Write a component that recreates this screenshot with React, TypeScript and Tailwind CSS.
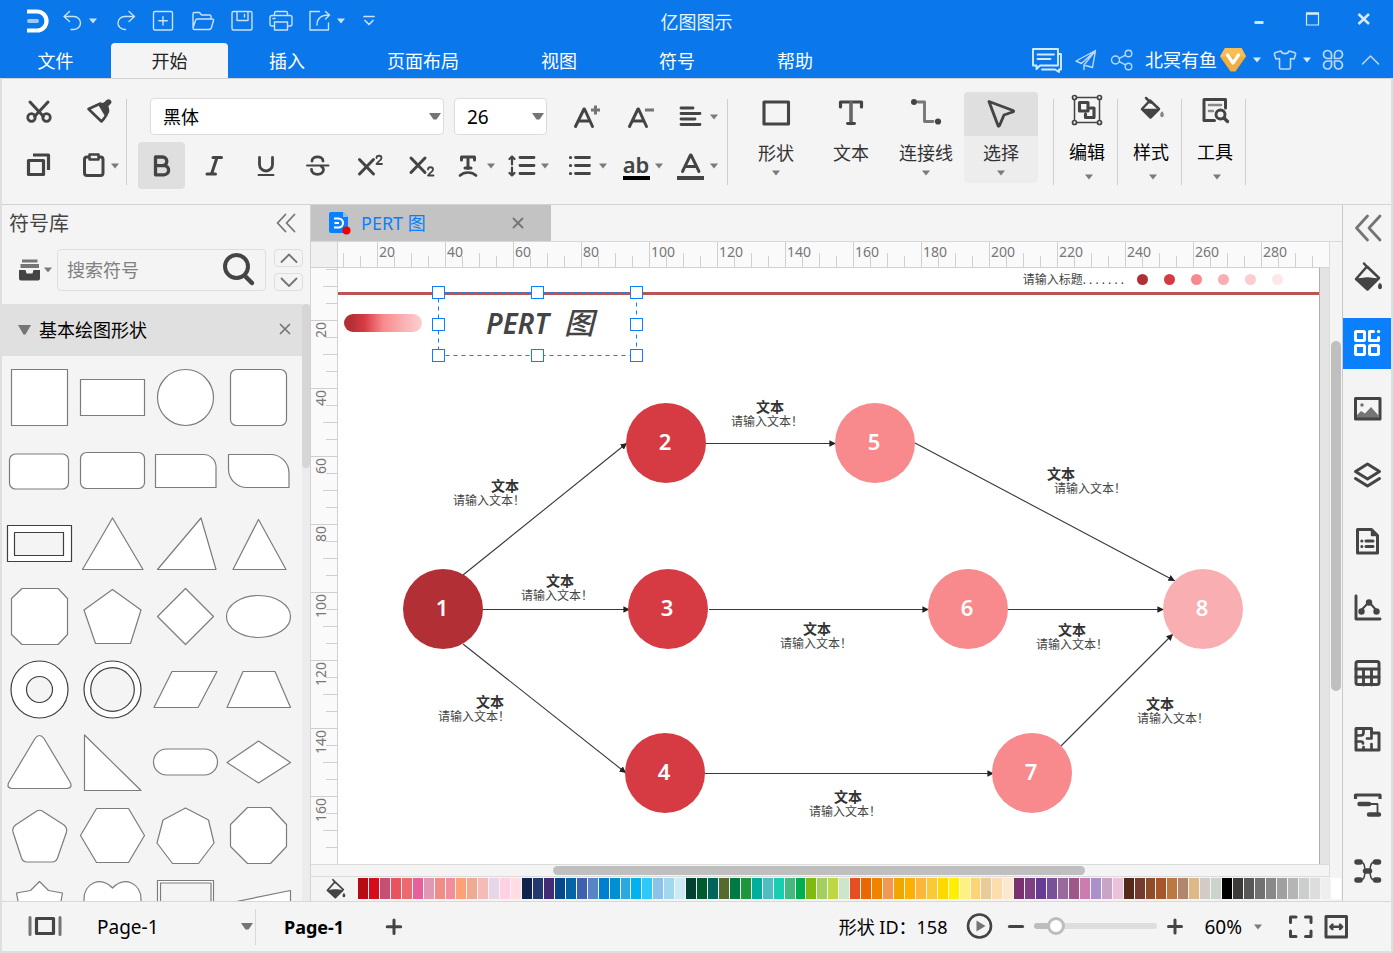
import React from "react";

type Kids = { children?: React.ReactNode };

function Glyph({ w, h, className = "", children }: Kids & { w: number; h: number; className?: string }) {
  return (
    <svg
      width={w}
      height={h}
      viewBox={`0 0 ${w} ${h}`}
      fill="none"
      stroke="currentColor"
      strokeWidth={1.4}
      strokeLinecap="round"
      strokeLinejoin="round"
      aria-hidden="true"
      className={`shrink-0 ${className}`}
    >
      {children}
    </svg>
  );
}

function Btn({ label, className = "", children }: Kids & { label: string; className?: string }) {
  return (
    <button type="button" aria-label={label} className={`flex shrink-0 items-center justify-center ${className}`}>
      {children}
    </button>
  );
}

function Caret({ className = "" }: { className?: string }) {
  return (
    <svg width={10} height={8} viewBox="0 0 10 8" aria-hidden="true" className={`shrink-0 ${className}`}>
      <path d="M1 1.5h8L5 6.5z" fill="currentColor" />
    </svg>
  );
}

function BigCaret({ className = "" }: { className?: string }) {
  return (
    <svg width={12} height={8} viewBox="0 0 12 8" aria-hidden="true" className={`shrink-0 text-[#757575] ${className}`}>
      <path d="M0 0h12L7.5 6.5h-3z" fill="currentColor" />
    </svg>
  );
}

/* ---------- title bar ---------- */

function TitleBar() {
  return (
    <div className="grid h-[43px] grid-cols-[1fr_auto_1fr] items-center">
      <div className="flex items-center pb-[2px] pl-[26px] text-[#c9e1fb]">
        <svg width={24} height={26} viewBox="0 0 24 26" aria-hidden="true" className="shrink-0">
          <path d="M1 3.500h10a9.500 9.500 0 0 1 0 19H1" fill="none" stroke="#fff" strokeWidth="4.200" />
          <path d="M3 13h8" stroke="#9cc9f7" strokeWidth="4" strokeLinecap="round" />
        </svg>
        <Btn label="撤销" className="ml-[10px]">
          <Glyph w={24} h={24}>
            <path d="M9.500 2.500L4 7.500l5.500 5M4 7.500h10a6.500 6.500 0 0 1 0 13h-3" />
          </Glyph>
        </Btn>
        <Btn label="撤销选项" className="ml-1"><Caret /></Btn>
        <Btn label="恢复" className="ml-4">
          <Glyph w={24} h={24}>
            <path d="M15 2.500l5.500 5-5.500 5M20.500 7.500h-10a6.500 6.500 0 0 0 0 13h1" />
          </Glyph>
        </Btn>
        <Btn label="新建" className="ml-[13px]">
          <Glyph w={24} h={24}>
            <rect x="2.500" y="2.500" width="19" height="18.500" rx="1.500" />
            <path d="M12 7.500v8.500M7.800 11.800h8.500" />
          </Glyph>
        </Btn>
        <Btn label="打开" className="ml-4">
          <Glyph w={24} h={24}>
            <path d="M2 19V5q0-1.500 1.500-1.500h5l2 2.500h8q1.500 0 1.500 1.500V10M2 19l2.500-7.500Q5 10 6.500 10H21q2 0 1.500 1.500l-2 7q-.5 2-2.500 2H3.500Q2 20.500 2 19" />
          </Glyph>
        </Btn>
        <Btn label="保存" className="ml-[15px]">
          <Glyph w={24} h={24}>
            <rect x="2" y="2.500" width="20" height="18.500" rx="1.500" />
            <path d="M7 3v8.500h11V3M14.500 5.500v2.500" />
          </Glyph>
        </Btn>
        <Btn label="打印" className="ml-[15px]">
          <Glyph w={24} h={24}>
            <path d="M5.500 6V4q0-1.500 1.500-1.500h10q1.500 0 1.500 1.500v2M5.500 17H3q-2 0-2-2V8.500q0-2 2-2h18q2 0 2 2V15q0 2-2 2h-2.500M5.500 13h13v8h-13zM4 9.500h2" />
          </Glyph>
        </Btn>
        <Btn label="导出" className="ml-[15px]">
          <Glyph w={24} h={24}>
            <path d="M11.500 2.500H2v18.500h18.500v-7M9 16c0-6 3.500-10 12-10M17.500 2.500l4 3.500-4 4" />
          </Glyph>
        </Btn>
        <Btn label="导出选项" className="ml-1"><Caret /></Btn>
        <Btn label="更多" className="ml-[11px]">
          <Glyph w={24} h={24}>
            <path d="M7 7.500h10M8 11.500l4 4 4-4" strokeWidth="1.700" />
          </Glyph>
        </Btn>
      </div>
      <h1 className="text-[18px] leading-6 text-[#e8f3ff]">亿图图示</h1>
      <div className="flex items-center justify-end gap-[24px] pr-[17px] pb-[6px] text-[#d7eafd]">
        <Btn label="最小化">
          <Glyph w={24} h={24}><path d="M7.500 15.500h9" strokeWidth="2.800" strokeLinecap="butt" /></Glyph>
        </Btn>
        <Btn label="最大化" className="ml-[5px]">
          <Glyph w={24} h={24}>
            <path d="M6.500 6.500h12v11.500h-12z" strokeWidth="1.200" strokeLinejoin="miter" />
            <path d="M6 6.500h13" strokeWidth="2.600" strokeLinecap="butt" />
          </Glyph>
        </Btn>
        <Btn label="关闭" className="ml-1">
          <Glyph w={24} h={24}><path d="M6.500 7l10.500 10M17 7L6.500 17" strokeWidth="2.500" strokeLinecap="butt" /></Glyph>
        </Btn>
      </div>
    </div>
  );
}

const menus = ["插入", "页面布局", "视图", "符号", "帮助"];

function MenuBar() {
  return (
    <div className="flex h-[35px] items-stretch text-white">
      <nav className="flex text-[18px] leading-6">
        <button type="button" className="w-[111px]">文件</button>
        <button type="button" className="w-[117px] rounded-t-sm bg-[#f4f4f4] text-[#222]">开始</button>
        {menus.map((m) => (
          <button key={m} type="button" className="px-[41px]">{m}</button>
        ))}
      </nav>
      <div className="ml-auto flex items-center pr-[11px] pb-[2px] text-[#b9d9fa]">
        <Btn label="消息">
          <Glyph w={32} h={28} className="text-[#d7eafd]">
            <path d="M2 3h25v16.500H9L5.500 23v-3.500H2z" strokeWidth="1.900" />
            <path d="M6.500 8.500h16.500M6.500 13h13" strokeWidth="1.900" />
            <path d="M27.500 8h2.500v15.500h-2V26l-4-2.500H11" strokeWidth="1.900" />
          </Glyph>
        </Btn>
        <Btn label="发送" className="ml-[11px]">
          <Glyph w={24} h={24}>
            <path d="M21.500 2.500L2 13l5.500 2.500zM21.500 2.500L10 17l8.500 2.500zM10 17v4.500" />
          </Glyph>
        </Btn>
        <Btn label="分享" className="ml-3">
          <Glyph w={24} h={24}>
            <circle cx="5.500" cy="12" r="4" />
            <circle cx="18.500" cy="5.500" r="3.300" />
            <circle cx="18.500" cy="18.500" r="3.300" />
            <path d="M9.200 10.300l6.300-3.200M9.200 13.700l6.300 3.200" />
          </Glyph>
        </Btn>
        <span className="ml-[11px] text-[18px] leading-6 text-white">北冥有鱼</span>
        <svg width={28} height={26} viewBox="0 0 28 26" aria-hidden="true" className="ml-[2px]">
          <path d="M6 1h16.500l4.500 8.500L16.500 24.500h-5L1 9.500z" fill="#f2ae3e" />
          <path d="M6 1h16.500l4.500 8.500H1z" fill="#f7bd57" />
          <path d="M8.500 8l5.500 8 5.500-8" fill="none" stroke="#fff" strokeWidth="3.200" strokeLinecap="round" strokeLinejoin="round" />
        </svg>
        <Btn label="会员选项" className="ml-[5px] text-[#d7eafd]"><Caret /></Btn>
        <Btn label="皮肤" className="ml-[11px]">
          <Glyph w={24} h={24}>
            <path d="M8 3c1 3.500 7 3.500 8 0l5.500 1.500q1.500.8 1 2.200L21 11l-3.500-.5v9q0 1.500-1.500 1.500H8q-1.500 0-1.500-1.500v-9L3 11 1.500 6.700q-.5-1.400 1-2.200z" strokeWidth="1.600" />
          </Glyph>
        </Btn>
        <Btn label="皮肤选项" className="ml-[5px] text-[#d7eafd]"><Caret /></Btn>
        <Btn label="应用" className="ml-[9px]">
          <Glyph w={24} h={24}>
            <path d="M10.500 10.500H6.700a4 4 0 1 1 3.800-3.800zM13.500 10.500h3.800a4 4 0 1 0-3.800-3.800zM10.500 13h-3.800a4 4 0 1 0 3.800 3.800zM13.500 13h3.800a4 4 0 1 1-3.800 3.800z" strokeWidth="1.700" />
          </Glyph>
        </Btn>
        <Btn label="折叠功能区" className="ml-[13px]">
          <Glyph w={24} h={24}><path d="M4.500 16l8-8 8 8" strokeWidth="1.600" /></Glyph>
        </Btn>
      </div>
    </div>
  );
}

/* ---------- ribbon ---------- */

function Divider() {
  return <div className="mt-[20px] h-[86px] w-px shrink-0 bg-[#cfcfcf]" />;
}

function Drop({ label, className = "", children }: Kids & { label: string; className?: string }) {
  return (
    <Btn label={label} className={`h-[47px] gap-1 ${className}`}>
      {children}
      <Caret className="text-[#7a7a7a]" />
    </Btn>
  );
}

function LetterA({ sign }: { sign?: "+" | "-" }) {
  return (
    <Glyph w={28} h={28}>
      <path d="M3.500 23.500L12 6h.5L20.500 23.500M7 18h10.500" strokeWidth="3" />
      {sign && <path d="M19 7h9" strokeWidth="3" strokeLinecap="butt" className="text-[#757575]" />}
      {sign === "+" && <path d="M23.500 2.500v9" strokeWidth="3" strokeLinecap="butt" className="text-[#757575]" />}
    </Glyph>
  );
}

function ToolButton({ text, caret = true, active = false, children }: Kids & { text: string; caret?: boolean; active?: boolean }) {
  return (
    <button
      type="button"
      className={`flex h-[91px] w-[74px] shrink-0 flex-col items-center rounded-sm text-[#333] ${active ? "bg-[#ededed]" : ""}`}
    >
      <span className={`flex h-[44px] w-full items-center justify-center rounded-t-sm pb-[2px] text-[#444] ${active ? "bg-[#dfdfdf]" : ""}`}>
        {children}
      </span>
      <span className="mt-[5px] text-[18px] leading-6">{text}</span>
      {caret && <Caret className="mt-[4px] text-[#7a7a7a]" />}
    </button>
  );
}

function MenuTool({ text, children }: Kids & { text: string }) {
  return (
    <button type="button" className="flex w-[63px] shrink-0 flex-col items-center pt-[15px] pl-[3px] text-black">
      <span className="flex h-[32px] items-center text-[#444]">{children}</span>
      <span className="mt-[14px] text-[18px] leading-6">{text}</span>
      <Caret className="mt-[9px] ml-1 text-[#7a7a7a]" />
    </button>
  );
}

function Ribbon() {
  return (
    <div className="flex h-[127px] items-start overflow-hidden border-t border-b border-[#d2d2d2] bg-[#f4f4f4] text-[#444]">
      <div className="grid w-[124px] shrink-0 grid-cols-[74px_50px] grid-rows-[54px_54px] items-center pt-[6px]">
        <Btn label="剪切">
          <Glyph w={28} h={28}>
            <path d="M5 4l13.500 14.500M23 4L9.500 18.500" strokeWidth="3" />
            <circle cx="6.500" cy="19.500" r="3.800" strokeWidth="2.700" />
            <circle cx="21.500" cy="19.500" r="3.800" strokeWidth="2.700" />
          </Glyph>
        </Btn>
        <Btn label="格式刷" className="pr-1">
          <Glyph w={28} h={28}>
            <path d="M15.500 5.500L3.500 11l13 12.500c3-3 5-5.500 6-9.500z" strokeWidth="2.600" />
            <path d="M13.500 6c3-.5 5 0 6.500-1.500L22 2.500c2.500-1.500 5 1 3 3L23 7.500c-1 1.500 1.500 3.500.5 6.500l-3.500 3z" fill="currentColor" />
          </Glyph>
        </Btn>
        <Btn label="复制">
          <Glyph w={28} h={28}>
            <path d="M3.500 8.500h15v14h-15z" strokeWidth="3.200" />
            <path d="M8 3h15.500v15" strokeWidth="3.200" strokeLinecap="butt" />
          </Glyph>
        </Btn>
        <Btn label="粘贴" className="gap-[3px] pr-[3px]">
          <Glyph w={28} h={28}>
            <rect x="5.500" y="5" width="18.500" height="18.500" rx="2.500" strokeWidth="3" />
            <rect x="10.500" y="2.500" width="9" height="5" fill="#f4f4f4" strokeWidth="2.500" />
          </Glyph>
          <Caret className="text-[#7a7a7a]" />
        </Btn>
      </div>
      <Divider />
      <div className="flex shrink-0 flex-col">
        <div className="flex items-center pt-[19px] pl-[23px]">
          <div className="relative">
            <select aria-label="字体" className="block h-[37px] w-[294px] appearance-none rounded-sm border border-[#dcdcdc] bg-white pt-[2px] pl-3 text-[18px] text-black">
              <option>黑体</option>
            </select>
            <BigCaret className="pointer-events-none absolute top-[15px] right-[3px]" />
          </div>
          <div className="relative ml-[10px]">
            <select aria-label="字号" className="block h-[37px] w-[93px] appearance-none rounded-sm border border-[#dcdcdc] bg-white pt-[2px] pl-3 text-[19px] text-black">
              <option>26</option>
            </select>
            <BigCaret className="pointer-events-none absolute top-[15px] right-[3px]" />
          </div>
          <Btn label="增大字号" className="ml-[25px]"><LetterA sign="+" /></Btn>
          <Btn label="减小字号" className="ml-[26px]"><LetterA sign="-" /></Btn>
          <Btn label="对齐" className="ml-[23px] gap-1">
            <Glyph w={28} h={28}>
              <path d="M4 5h12M4 10.500h19M4 16h14M4 21.500h19" strokeWidth="2.800" />
            </Glyph>
            <Caret className="text-[#7a7a7a]" />
          </Btn>
        </div>
        <div className="flex items-center pt-[7px] pl-[11px]">
          <Btn label="加粗" className="h-[47px] w-[47px] rounded-sm bg-[#dfdfdf]">
            <Glyph w={28} h={28}>
              <path d="M7.500 5h7a4.300 4.300 0 0 1 0 8.600H7.500zM7.500 13.600h8.500a4.600 4.600 0 0 1 0 9.200H7.500z" strokeWidth="3.300" />
            </Glyph>
          </Btn>
          <Btn label="斜体" className="ml-[5px] h-[47px] w-[47px]">
            <Glyph w={28} h={28}><path d="M13 5.500h8.500M7 22h8.500M17 5.500l-5.500 16.500" strokeWidth="3" /></Glyph>
          </Btn>
          <Btn label="下划线" className="ml-[5px] h-[47px] w-[47px]">
            <Glyph w={28} h={28}>
              <path d="M7.500 5.500v7a6.500 6.500 0 0 0 13 0v-7" strokeWidth="2.800" />
              <path d="M6.500 23h15" strokeWidth="1.900" />
            </Glyph>
          </Btn>
          <Btn label="删除线" className="ml-[5px] h-[47px] w-[47px]">
            <Glyph w={28} h={28}>
              <path d="M19 9C19 3.500 8 3.500 8 9M7.500 17.500c0 6.500 12 6.500 12 0 0-1-.5-2-2-3" strokeWidth="2.800" />
              <path d="M3 13.500h21.500" strokeWidth="1.900" />
            </Glyph>
          </Btn>
          <Btn label="上标" className="ml-[5px] h-[47px] w-[47px]">
            <Glyph w={28} h={28}>
              <path d="M3.500 7.500l14 14.500M17.500 7.500l-14 14.500" strokeWidth="3" />
              <path d="M20.500 6c0-3 5-3 5 0 0 2-3 3-5 6h5.500" strokeWidth="1.800" />
            </Glyph>
          </Btn>
          <Btn label="下标" className="ml-[5px] h-[47px] w-[47px]">
            <Glyph w={28} h={28}>
              <path d="M3 6l14 14.500M17 6l-14 14.500" strokeWidth="3" />
              <path d="M20 17.500c0-3 5-3 5 0 0 2-3 3-5 6h5.500" strokeWidth="1.800" />
            </Glyph>
          </Btn>
          <Drop label="文字方向" className="ml-[9px]">
            <Glyph w={28} h={28}>
              <path d="M7.500 8V5h13v3M14 5.500v11M11 16h6" strokeWidth="3" />
              <path d="M6 23.500c4-4 12-4 16 0" strokeWidth="2.600" />
            </Glyph>
          </Drop>
          <Drop label="行距" className="ml-[12px]">
            <Glyph w={28} h={28}>
              <path d="M12 5.500h14M12 13.500h14M12 21.500h14" strokeWidth="2.900" />
              <path d="M4 4.500v8M1.500 7L4 4.500 6.500 7M4 15.500v8M1.500 21L4 23.500 6.500 21" strokeWidth="2.200" />
            </Glyph>
          </Drop>
          <Drop label="列表" className="ml-[16px]">
            <Glyph w={28} h={28}>
              <path d="M9.500 5.500h14M9.500 13.500h14M9.500 21.500h14" strokeWidth="2.800" />
              <path d="M4.500 5.500h.1M4.500 13.500h.1M4.500 21.500h.1" strokeWidth="3.200" />
            </Glyph>
          </Drop>
          <Drop label="突出显示" className="ml-[14px]">
            <span className="flex w-[28px] flex-col items-center">
              <span className="text-[22px] leading-[24px] font-semibold">ab</span>
              <span className="h-1 w-[27px] bg-black" />
            </span>
          </Drop>
          <Drop label="字体颜色" className="ml-[13px]">
            <Glyph w={28} h={28}>
              <path d="M5.500 19.500L13.500 3h.5L22 19.500M8.500 14.500h10.500" strokeWidth="2.900" />
              <path d="M0 26h27" strokeWidth="4" strokeLinecap="butt" />
            </Glyph>
          </Drop>
        </div>
      </div>
      <div className="ml-2 flex"><Divider /></div>
      <div className="ml-[11px] flex shrink-0 gap-px pt-[13px]">
        <ToolButton text="形状">
          <Glyph w={32} h={32}><path d="M4 5h24.500v22H4z" strokeWidth="3.100" /></Glyph>
        </ToolButton>
        <ToolButton text="文本" caret={false}>
          <Glyph w={32} h={32}>
            <path d="M5.500 10V5h21v5" strokeWidth="3.200" />
            <path d="M16 5.500v21" strokeWidth="3.600" className="text-[#666]" />
            <path d="M12.500 26.500h7" strokeWidth="2.900" />
          </Glyph>
        </ToolButton>
        <ToolButton text="连接线">
          <Glyph w={32} h={32}>
            <path d="M8 5h6.500v19.500H23" strokeWidth="2.900" className="text-[#777]" />
            <circle cx="4" cy="5" r="3" fill="currentColor" stroke="none" />
            <circle cx="28" cy="24.500" r="3.100" fill="currentColor" stroke="none" />
          </Glyph>
        </ToolButton>
        <ToolButton text="选择" active>
          <Glyph w={32} h={32}>
            <path d="M4 4.500l24 9q1.500 1-.5 1.500l-8.500 3-4.500 10.500q-1 1.500-1.500 0z" strokeWidth="2.900" />
          </Glyph>
        </ToolButton>
      </div>
      <div className="ml-[15px] flex shrink-0 items-start">
        <Divider />
        <MenuTool text="编辑">
          <Glyph w={32} h={32}>
            <path d="M3.500 3.500h25v25h-25z" strokeWidth="1.500" />
            <g fill="#f4f4f4" strokeWidth="1.700">
              <circle cx="3.500" cy="3.500" r="2" />
              <circle cx="28.500" cy="3.500" r="2" />
              <circle cx="3.500" cy="28.500" r="2" />
              <circle cx="28.500" cy="28.500" r="2" />
            </g>
            <path d="M8.500 8.500h8.500V17H8.500zM19.500 14H23v9.500h-8.500V20" strokeWidth="3.100" />
          </Glyph>
        </MenuTool>
        <Divider />
        <MenuTool text="样式">
          <Glyph w={32} h={32}>
            <path d="M11 4l4.500 4.500M15 6.500L24 15l-8.500 8.500L7 15z" strokeWidth="2.500" />
            <path d="M8 15.500h15l-7.500 8z" fill="currentColor" />
            <path d="M27 18.500c-3 5 3 5 0 0z" fill="currentColor" strokeWidth="2" className="text-[#888]" />
          </Glyph>
        </MenuTool>
        <Divider />
        <MenuTool text="工具">
          <Glyph w={32} h={32}>
            <path d="M26.500 14V5.500H5v21h10.500" strokeWidth="3" />
            <path d="M10 11h12M10 17h4" strokeWidth="2.600" className="text-[#888]" />
            <circle cx="21.500" cy="20.500" r="4.500" strokeWidth="2.900" />
            <path d="M25 24l3.500 3.500" strokeWidth="3.200" />
          </Glyph>
        </MenuTool>
        <Divider />
      </div>
    </div>
  );
}

/* ---------- symbol library ---------- */

const dark = "#3f3f3f";
const hole = "#f4f4f4";

const shapes: { name: string; art: React.ReactNode }[] = [
  { name: "正方形", art: <rect x="8.500" y="8.500" width="56" height="56" /> },
  { name: "矩形", art: <rect x="4.500" y="18.500" width="64" height="36" /> },
  { name: "圆形", art: <circle cx="36.500" cy="36.500" r="28" /> },
  { name: "圆角正方形", art: <rect x="8.500" y="8.500" width="56" height="56" rx="6" /> },
  { name: "圆角矩形", art: <rect x="6.500" y="20" width="59" height="35" rx="6" /> },
  { name: "圆角长方形", art: <rect x="4.500" y="18.500" width="64" height="36" rx="6" /> },
  { name: "单圆角矩形", art: <path d="M6.500 20.500h48a12.500 12.500 0 0 1 12.500 12.500v20.500h-60.500z" /> },
  { name: "对角圆角矩形", art: <path d="M6.500 20.500h42a18.500 18.500 0 0 1 18.500 18.500v14.500h-42a18.500 18.500 0 0 1-18.500-18.500z" /> },
  { name: "框架", art: <g stroke={dark}><rect x="4.500" y="18.500" width="64" height="36" /><rect x="11.500" y="25.500" width="49" height="23" fill={hole} /></g> },
  { name: "三角形", art: <path d="M36.500 11L67 62.500H6.500z" /> },
  { name: "斜三角形", art: <path d="M52 11l15 51.500H8.500z" /> },
  { name: "等腰三角形", art: <path d="M36.500 12.500L64 62.500H11z" /> },
  { name: "切角正方形", art: <path d="M19 8.500h36l9.500 10v36l-9.500 10H19l-10.500-10v-36z" /> },
  { name: "五边形", art: <path d="M36.500 9.500L65 30 54.500 63.500h-35L8 30z" /> },
  { name: "菱形", art: <path d="M36.500 8.500l28 28-28 28-28-28z" /> },
  { name: "椭圆", art: <ellipse cx="36.500" cy="36.500" rx="32" ry="21" /> },
  { name: "圆环", art: <g stroke={dark}><circle cx="36.500" cy="36.500" r="28.500" /><circle cx="36.500" cy="36.500" r="13" fill={hole} /></g> },
  { name: "双圆", art: <g stroke={dark}><circle cx="36.500" cy="36.500" r="28.500" /><circle cx="36.500" cy="36.500" r="21.800" fill={hole} /></g> },
  { name: "平行四边形", art: <path d="M23 18.500h45L49 54.500H5z" /> },
  { name: "梯形", art: <path d="M21 18.500h32l15.500 36H5z" /> },
  { name: "圆角三角形", art: <path d="M32 12.500q4.500-6 9 0L67 56q3 6-3 6.500H9q-6-.5-3-6.500z" /> },
  { name: "直角三角形", art: <path d="M8.500 9v55.500H65z" /> },
  { name: "胶囊形", art: <rect x="4.500" y="23" width="64" height="26" rx="13" /> },
  { name: "扁菱形", art: <path d="M36.500 15L68.500 36.500 36.500 57 5 36.500z" /> },
  { name: "圆角五边形", art: <path d="M33 12.500q3.500-2.500 7 0L61 26q3.500 3 2.500 7l-9 26q-1.500 4-5.500 4H24q-4 0-5.500-4L10 33q-1-4 2.500-7z" /> },
  { name: "六边形", art: <path d="M20.500 9.500h32l16 27-16 27h-32l-16-27z" /> },
  { name: "七边形", art: <path d="M36.500 9L59.500 21 65 44 49.500 64.500h-26L8 44 14 21z" /> },
  { name: "八边形", art: <path d="M25.500 8.500h23l16 17v22l-16 17h-23l-17-17v-22z" /> },
  { name: "六角星", art: <path d="M36.500 9.500l9 9 14 2.500-3 16 3 15-14 3-9 9-9-9-14-3 3-15-3-16 14-2.500z" /> },
  { name: "心形", art: <path d="M36.500 16C49 3 65 12 65 27c0 14-13 26-28.500 38C21 53 8 41 8 27 8 12 24 3 36.500 16z" /> },
  { name: "双线正方形", art: <g><rect x="8.500" y="8.500" width="56" height="56" /><rect x="11.500" y="11" width="50.500" height="51" fill={hole} /></g> },
  { name: "楔形", art: <path d="M68.500 18.500L5 31.500v23h63.500z" /> },
];

function SymbolPanel() {
  return (
    <aside className="flex w-[308px] shrink-0 flex-col overflow-hidden">
      <div className="flex h-[38px] shrink-0 items-center justify-between pr-[14px] pl-[7px]">
        <h2 className="text-[20px] leading-6 text-[#444]">符号库</h2>
        <Btn label="折叠面板" className="pb-[2px]">
          <Glyph w={20} h={20} className="text-[#757575]">
            <path d="M9.500 1.500L1.500 10l8 8.500M18.500 1.500l-8 8.500 8 8.500" strokeWidth="1.800" />
          </Glyph>
        </Btn>
      </div>
      <div className="flex shrink-0 items-center pt-[6px] pb-[13px] pl-[16px]">
        <Btn label="符号库菜单" className="gap-px">
          <svg width={24} height={24} viewBox="0 0 24 24" aria-hidden="true">
            <path d="M4 1.500h15.500v3H4zM2.500 6h18.500v4h-18.500z" fill="#757575" />
            <path d="M1 12h6.500l1 3.500h6l1-3.500H22v8.500q0 2-2 2H3q-2 0-2-2z" fill="#444" />
          </svg>
          <Caret className="text-[#7a7a7a]" />
        </Btn>
        <label className="ml-1 flex h-[42px] w-[209px] items-center rounded-sm border border-[#dedede] px-[9px]">
          <input
            type="text"
            aria-label="搜索符号"
            placeholder="搜索符号"
            className="w-0 flex-1 bg-transparent text-[18px] text-[#444] outline-none placeholder:text-[#808080]"
          />
          <Glyph w={34} h={34} className="text-[#444]">
            <circle cx="14.500" cy="13.500" r="11.500" strokeWidth="4" />
            <path d="M23 23l7 7" strokeWidth="4.500" />
          </Glyph>
        </label>
        <div className="ml-2 flex flex-col gap-[6px] text-[#757575]">
          <Btn label="上一个" className="h-[18px] w-[29px] rounded-sm border border-[#dedede]">
            <Glyph w={18} h={10}><path d="M1.500 9l7.500-7.500L16.500 9" strokeWidth="1.800" /></Glyph>
          </Btn>
          <Btn label="下一个" className="h-[18px] w-[29px] rounded-sm border border-[#dedede]">
            <Glyph w={18} h={10}><path d="M1.500 1.500L9 9l7.500-7.500" strokeWidth="1.800" /></Glyph>
          </Btn>
        </div>
      </div>
      <div className="flex min-h-0 flex-1">
        <div className="flex w-[300px] flex-col overflow-hidden">
          <div className="flex h-[52px] shrink-0 items-center bg-[#e0e0e0] pr-[10px] pl-[16px]">
            <svg width={13} height={10} viewBox="0 0 13 10" aria-hidden="true"><path d="M0 0h13L7.500 9.500h-2z" fill="#757575" /></svg>
            <h3 className="ml-2 text-[18px] leading-6 text-black">基本绘图形状</h3>
            <Btn label="关闭符号组" className="ml-auto pb-[2px] text-[#757575]">
              <Glyph w={14} h={14}><path d="M2.500 2.500l9 9M11.500 2.500l-9 9" strokeWidth="1.700" /></Glyph>
            </Btn>
          </div>
          <div className="grid grid-cols-[repeat(4,73px)] pt-[5px] pl-px">
            {shapes.map((s) => (
              <button key={s.name} type="button" aria-label={s.name} className="h-[73px] w-[73px]">
                <svg width={73} height={73} viewBox="0 0 73 73" fill="#fff" stroke="#7c7c7c" strokeWidth="1.200" strokeLinejoin="round" aria-hidden="true">
                  {s.art}
                </svg>
              </button>
            ))}
          </div>
        </div>
        <div className="w-2 bg-[#ececec]"><div className="h-[164px] rounded-full bg-[#d6d6d6]" /></div>
      </div>
    </aside>
  );
}

/* ---------- canvas ---------- */

const range = (n: number) => Array.from({ length: n }, (_, i) => i);

function TopRuler() {
  return (
    <svg className="h-[25px] w-full" aria-hidden="true">
      {range(58).map((i) => (
        <path key={i} d={`M${i * 17 + 5}.5 ${i % 4 === 2 ? 0 : i % 2 === 0 ? 11 : 14}v25`} stroke="#cfcfcf" />
      ))}
      {range(14).map((i) => (
        <text key={i} x={i * 68 + 41} y="15" fontSize="14" fill="#777">{(i + 1) * 20}</text>
      ))}
    </svg>
  );
}

function LeftRuler() {
  return (
    <svg className="h-full w-[26px]" aria-hidden="true">
      {range(36).map((i) => (
        <path key={i} d={`M${i % 4 === 3 ? 0 : i % 2 === 1 ? 12 : 15} ${i * 17 + 1}.5h26`} stroke="#cfcfcf" />
      ))}
      {range(8).map((i) => (
        <text key={i} transform={`translate(15 ${i * 68 + 54}) rotate(-90)`} textAnchor="end" fontSize="14" fill="#777">
          {(i + 1) * 20}
        </text>
      ))}
    </svg>
  );
}

const nodes = [
  { id: "1", x: 105, y: 341, color: "#b22f36" },
  { id: "2", x: 328, y: 175, color: "#d63b43" },
  { id: "3", x: 330, y: 341, color: "#d63b43" },
  { id: "4", x: 327, y: 505, color: "#d63b43" },
  { id: "5", x: 537, y: 175, color: "#f8898c" },
  { id: "6", x: 630, y: 341, color: "#f8898c" },
  { id: "7", x: 694, y: 505, color: "#f8898c" },
  { id: "8", x: 865, y: 341, color: "#f9aeb1" },
];

const links = [
  "M125 307L289 175",
  "M125 376L288 505",
  "M145 341.500H292",
  "M368 175.500H498",
  "M371 341.500H591",
  "M367 505.500H656",
  "M577 175L837 313",
  "M670 341.500H826",
  "M723 478L835 366",
];

const labels = [
  { tx: 153, sx: 115, y: 218 },
  { tx: 418, sx: 393, y: 139 },
  { tx: 709, sx: 716, y: 206 },
  { tx: 208, sx: 183, y: 313 },
  { tx: 465, sx: 442, y: 361 },
  { tx: 720, sx: 698, y: 362 },
  { tx: 138, sx: 100, y: 434 },
  { tx: 808, sx: 799, y: 436 },
  { tx: 496, sx: 471, y: 529 },
];

const legend = ["#b22f36", "#d63b43", "#f8898c", "#f9aeb1", "#fccdd0", "#fde7e8"];

const handles = [
  [0, 0], [99, 0], [198, 0],
  [0, 32], [198, 32],
  [0, 63], [99, 63], [198, 63],
];

function Canvas() {
  return (
    <div className="relative min-w-0 flex-1 overflow-hidden bg-white">
      <div className="absolute top-0 right-[35px] flex h-[23px] items-center text-[#444]">
        <span className="text-[12px] leading-5 whitespace-nowrap">请输入标题. . . . . . .</span>
        <span className="ml-[13px] flex gap-4 pr-px">
          {legend.map((c) => (
            <svg key={c} width={11} height={11} viewBox="0 0 11 11" aria-hidden="true"><circle cx="5.500" cy="5.500" r="5.500" fill={c} /></svg>
          ))}
        </span>
      </div>
      <div className="absolute top-[24px] left-0 h-[3px] w-full bg-[#bb5454]" />
      <div className="absolute top-[46px] left-[6px] h-[18px] w-[78px] rounded-full bg-[linear-gradient(90deg,#b22f36_8%,#d63b43_26%,#f8898c_50%,#f9b4b6_78%,#fbcfd1_100%)]" />
      <div className="absolute top-[18px] left-[94px] h-[77px] w-[212px]">
        <div className="absolute inset-[6px] flex items-center justify-center gap-[15px] pb-1 pl-[4px] leading-10 italic text-[#444]">
          <span className="text-[28px] font-semibold">PERT</span>
          <span className="text-[30px] font-medium">图</span>
        </div>
        <svg width={212} height={77} className="absolute inset-0" aria-hidden="true">
          <g stroke="#0a80ff" transform="translate(6.500 6.500)">
            <path d="M0 0H198V63H0z" fill="none" strokeDasharray="4 4" />
            {handles.map(([x, y]) => (
              <rect key={`${x}-${y}`} x={x - 6} y={y - 6} width={12} height={12} fill="#fff" />
            ))}
          </g>
        </svg>
      </div>
      <svg className="absolute inset-0 h-full w-full" aria-hidden="true">
        <defs>
          <marker id="tip" viewBox="0 0 6 6" refX="6" refY="3" markerWidth="6" markerHeight="6" orient="auto">
            <path d="M0 0l6 3-6 3z" fill="#222" />
          </marker>
        </defs>
        {links.map((d) => (
          <path key={d} d={d} stroke="#333842" strokeWidth="1.100" markerEnd="url(#tip)" />
        ))}
      </svg>
      {nodes.map((n) => (
        <div
          key={n.id}
          className="absolute flex h-[80px] w-[80px] -translate-1/2 items-center justify-center rounded-full pr-[2px] pb-[4px] text-[22px] leading-6 font-semibold text-white"
          style={{ left: n.x, top: n.y, backgroundColor: n.color }}
        >
          {n.id}
        </div>
      ))}
      {labels.map((l) => (
        <React.Fragment key={`${l.tx}-${l.y}`}>
          <span className="absolute -mt-[7px] text-[14px] leading-[14px] font-bold whitespace-nowrap text-[#333]" style={{ left: l.tx, top: l.y }}>文本</span>
          <span className="absolute mt-2 text-[12px] leading-[14px] whitespace-nowrap text-[#444]" style={{ left: l.sx, top: l.y }}>请输入文本！</span>
        </React.Fragment>
      ))}
    </div>
  );
}

const palette =
  "b60a14 d80b1c c64f74 e95361 ea6a6e e5609c e098b5 ee8e86 f08f9a ffa076 eeab93 f4bbb9 e9d5e8 ffd1e3 ffdde3 10234f 24396f 432c76 07478c 0465a6 4062ae 5785c6 007fd0 008fd0 2ca8e0 00b3f0 30c7f9 8cc1ea a1d8ef cdeaf5 024032 005b30 01655d 566a2e 007a45 1f963c 00ae9d 52bdc0 19cdb3 48b97e 00af50 80b90f a2ce62 bed742 cce6c9 e44e20 eb6700 f08300 f29852 f2a600 feb000 fcb73a f9ca33 ffd800 fff000 fcf283 fcd473 e9cb97 fcdeae fce8cf 7a3170 813f83 663d94 775298 99699d 9d5789 ca7dae aa91cc c8a4c7 eac2da 56291a 743c2f 8e4c28 a65628 bd7740 b2866d deb887 d3cbc6 cad4cb 000000 3e3a39 5a5758 727171 888888 9fa0a0 b5b5b6 cccdcd dcdddd eeeeee ffffff".split(" ");

function Bucket({ size = 32 }: { size?: number }) {
  return (
    <svg width={size} height={size} viewBox="0 0 32 32" fill="none" stroke="currentColor" strokeLinejoin="round" strokeLinecap="round" aria-hidden="true">
      <path d="M13 2.500l4 4.500M16 5.500L28 17 16.500 28.500 5 18z" strokeWidth="2.500" />
      <path d="M5.500 18q11-2.500 22 0l-11 10.500z" fill="currentColor" />
      <path d="M29 23.500c-2.500 4.500 2.500 4.500 0 0z" fill="currentColor" strokeWidth="2.600" />
    </svg>
  );
}

function Workspace() {
  return (
    <main className="flex min-w-0 flex-1 flex-col border-l border-[#d2d2d2]">
      <div className="flex h-[37px] shrink-0 border-b border-[#d8d8d8]">
        <div className="flex w-[240px] items-center bg-[#c3c3c3] pl-[18px]">
          <svg width={22} height={24} viewBox="0 0 22 24" aria-hidden="true">
            <path d="M0 3q0-2 2-2h12l5 5v14q0 2-2 2H2q-2 0-2-2z" fill="#0a80ff" />
            <path d="M14 1l5 5h-5z" fill="#8ac2ff" />
            <path d="M5 7.500h4.500a4.500 4.500 0 0 1 0 9H5M5.500 12h4.500" fill="none" stroke="#fff" strokeWidth="2" />
            <circle cx="17.500" cy="19.500" r="4" fill="#f00000" />
          </svg>
          <span className="ml-[10px] text-[18px] leading-6 text-[#0a80ff]">PERT 图</span>
          <Btn label="关闭文档" className="mr-[25px] ml-auto text-[#757575]">
            <Glyph w={16} h={16}><path d="M3.500 3.500l9 9M12.500 3.500l-9 9" strokeWidth="1.800" /></Glyph>
          </Btn>
        </div>
      </div>
      <div className="flex min-h-0 flex-1">
        <div className="flex min-w-0 flex-1 flex-col">
          <div className="flex h-[26px] shrink-0 border-b border-[#d2d2d2] bg-[#fafafa]">
            <div className="w-[27px] shrink-0 border-r border-[#d2d2d2] bg-[#f0f0f0]" />
            <div className="min-w-0 flex-1"><TopRuler /></div>
          </div>
          <div className="flex min-h-0 flex-1">
            <div className="w-[27px] shrink-0 overflow-hidden border-r border-[#d2d2d2] bg-[#fafafa]"><LeftRuler /></div>
            <Canvas />
            <div className="w-[10px] border-l border-[#b0b0b0] bg-[#e4e4e4]" />
          </div>
          <div className="h-[13px] shrink-0 border-y border-[#dcdcdc] py-px">
            <div className="ml-[23.800%] h-[9px] w-[52.200%] rounded-full bg-[#bfbfbf]" />
          </div>
        </div>
        <div className="w-[13px] border-l border-[#dcdcdc] px-px pt-[99px]">
          <div className="h-[350px] rounded-full bg-[#bfbfbf]" />
        </div>
      </div>
      <div className="flex h-[24px] shrink-0 items-start pt-px">
        <div className="flex w-[47px] justify-center text-[#444]">
          <Bucket size={22} />
        </div>
        <div className="flex min-w-0 flex-1 gap-px">
          {palette.map((c) => (
            <button key={c} type="button" aria-label={`#${c}`} className="h-[21px] min-w-0 flex-1" style={{ backgroundColor: `#${c}` }} />
          ))}
        </div>
      </div>
    </main>
  );
}

/* ---------- right toolbar ---------- */

const sideTools: { name: string; art: React.ReactNode }[] = [
  { name: "填充", art: <Bucket /> },
  {
    name: "符号",
    art: (
      <Glyph w={32} h={32}>
        <g strokeWidth="3">
          <rect x="4.500" y="4.500" width="9" height="9" rx="1" />
          <rect x="4.500" y="18.500" width="9" height="9" rx="1" />
          <rect x="18.500" y="18.500" width="9" height="9" rx="1" />
          <path d="M22.500 4.500h-4v9h9V10.500" />
        </g>
        <path d="M27.500 4.500h.1" strokeWidth="3.200" />
      </Glyph>
    ),
  },
  {
    name: "图片",
    art: (
      <Glyph w={32} h={32}>
        <path d="M5 25v-2l5-5 4 2.500 6-6.500 7.500 8.500V25z" fill="#757575" stroke="none" />
        <circle cx="11" cy="12" r="1.800" fill="#757575" stroke="none" />
        <path d="M4.500 5.500h24.500v20.500H4.500z" strokeWidth="3" />
      </Glyph>
    ),
  },
  {
    name: "图层",
    art: <Glyph w={32} h={32}><path d="M16.500 5l12 7.500-12 7.500-12-7.500zM4.500 19.500l12 7.500 12-7.500" strokeWidth="3" /></Glyph>,
  },
  {
    name: "页面",
    art: (
      <Glyph w={32} h={32}>
        <path d="M6.500 4.500h14l6 6V28h-20z" strokeWidth="3" />
        <path d="M20.500 4.500v6h6z" fill="currentColor" />
        <path d="M15 16h7M15 21.500h7M10.800 16h.1M10.800 21.500h.1" strokeWidth="3" />
      </Glyph>
    ),
  },
  {
    name: "图表",
    art: (
      <Glyph w={32} h={32}>
        <path d="M5 5v23h24" strokeWidth="2.900" />
        <path d="M9.500 20L18 11l8 9" strokeWidth="2" />
        <g fill="currentColor" stroke="none"><circle cx="10.500" cy="20.500" r="3.200" /><circle cx="18" cy="11.500" r="3.200" /><circle cx="25.500" cy="20.500" r="3.200" /></g>
      </Glyph>
    ),
  },
  {
    name: "表格",
    art: (
      <Glyph w={32} h={32}>
        <rect x="5" y="4.500" width="23" height="23" rx="2" strokeWidth="3" />
        <path d="M5 12h23M5 20h23M12.500 12v16M20.500 12v16" strokeWidth="2.900" />
      </Glyph>
    ),
  },
  {
    name: "平面图",
    art: (
      <Glyph w={32} h={32}>
        <path d="M5 5.500h15.500V10h7.500v17H5z" strokeWidth="3" />
        <path d="M5 18.500h5q2 0 2 2M12.500 6v3.500q0 3-3 3H6M12.500 27v-3M20.500 10v5M20.500 27v-6M16 15.500h4.500" strokeWidth="2.700" />
      </Glyph>
    ),
  },
  {
    name: "时间线",
    art: (
      <Glyph w={32} h={32}>
        <path d="M4.500 10V6H29v4" strokeWidth="3.200" strokeLinecap="butt" />
        <path d="M8.500 15h9.500M18 25.500h10" strokeWidth="4.400" />
        <path d="M18 15h8.500V25" strokeWidth="1.800" />
      </Glyph>
    ),
  },
  {
    name: "思维导图",
    art: (
      <Glyph w={32} h={32}>
        <path d="M6 7h3M24.500 7h3M6 25h3M24.500 25h3M14.500 16h4" strokeWidth="5.500" />
        <path d="M9 7q4 0 4.500 4.500t3 4.500q2.500 0 3-4.500T24 7M9 25q4 0 4.500-4.500t3-4.500q2.500 0 3 4.500T24 25" strokeWidth="1.600" />
      </Glyph>
    ),
  },
];

function SideBar() {
  return (
    <aside className="flex w-[49px] shrink-0 flex-col overflow-hidden border-l border-[#c8c8c8] text-[#444]">
      <Btn label="展开面板" className="h-[47px] pb-px pl-px">
        <Glyph w={30} h={28} className="text-[#757575]">
          <path d="M14.500 2L3.500 14l11 12M27 2L16 14l11 12" strokeWidth="2.800" />
        </Glyph>
      </Btn>
      <div className="flex flex-col gap-[15px]">
        {sideTools.map((t) => (
          <Btn key={t.name} label={t.name} className={`h-[51px] w-full pb-[2px] ${t.name === "符号" ? "bg-[#0a80ff] text-white" : ""}`}>
            {t.art}
          </Btn>
        ))}
      </div>
    </aside>
  );
}

/* ---------- status bar ---------- */

function StatusBar() {
  return (
    <footer className="flex h-[50px] shrink-0 items-center border-t border-[#d8d8d8] text-[18px] text-black">
      <Btn label="页面视图" className="ml-[25px] pb-[2px]">
        <Glyph w={36} h={24} className="text-[#444]">
          <path d="M9.500 4.500h17v15h-17z" strokeWidth="3.200" />
          <path d="M3 3.500v17M33 3.500v17" strokeWidth="3" className="text-[#757575]" />
        </Glyph>
      </Btn>
      <div className="relative ml-[32px]">
        <select aria-label="当前页面" className="block h-[36px] w-[161px] appearance-none border-r border-[#d8d8d8] bg-transparent pt-[2px] pl-[2px] text-[19px]">
          <option>Page-1</option>
        </select>
        <BigCaret className="pointer-events-none absolute top-[14px] right-[3px]" />
      </div>
      <button type="button" className="ml-[28px] text-[18px] leading-6 font-bold">Page-1</button>
      <Btn label="添加页面" className="ml-[40px] text-[#444]">
        <Glyph w={20} h={20}><path d="M10 3v13.500M3.200 9.800h13.500" strokeWidth="3" /></Glyph>
      </Btn>
      <span className="ml-auto text-[18px] leading-6">形状 ID：158</span>
      <Btn label="播放" className="ml-[18px]">
        <Glyph w={28} h={28} className="text-[#444]">
          <circle cx="14.500" cy="13" r="11.500" strokeWidth="2.600" />
          <path d="M11.500 7.500l9 5.500-9 5.500z" fill="#757575" stroke="none" />
        </Glyph>
      </Btn>
      <Btn label="缩小" className="ml-[13px] text-[#444]">
        <Glyph w={20} h={20}><path d="M3.500 9.500h13" strokeWidth="3.200" /></Glyph>
      </Btn>
      <input
        type="range"
        aria-label="缩放"
        min={0}
        max={100}
        defaultValue={12}
        className="mb-[2px] ml-2 h-[6px] w-[123px] appearance-none rounded-full bg-[linear-gradient(90deg,#bdbdbd_16%,#dedede_16%)] [&::-webkit-slider-thumb]:h-[18px] [&::-webkit-slider-thumb]:w-[18px] [&::-webkit-slider-thumb]:appearance-none [&::-webkit-slider-thumb]:rounded-full [&::-webkit-slider-thumb]:border-[3px] [&::-webkit-slider-thumb]:border-[#bdbdbd] [&::-webkit-slider-thumb]:bg-white"
      />
      <Btn label="放大" className="ml-2 text-[#444]">
        <Glyph w={20} h={20}><path d="M10 3v13M3.500 9.500h13" strokeWidth="3" /></Glyph>
      </Btn>
      <button type="button" className="ml-[19px] flex items-center gap-[11px] text-[19px] leading-6">
        60%
        <Caret className="text-[#7a7a7a]" />
      </button>
      <Btn label="全屏" className="ml-[24px] text-[#444]">
        <Glyph w={28} h={26}>
          <path d="M3.500 8.500V3h5.500M18.500 3h5.500v5.500M24 17v5.500h-5.500M9 22.500H3.500V17" strokeWidth="3" />
        </Glyph>
      </Btn>
      <Btn label="适合宽度" className="mr-[41px] ml-[7px] text-[#444]">
        <Glyph w={28} h={26}>
          <path d="M4 2.500h20.500v20.500H4z" strokeWidth="3" />
          <path d="M9 12.800h10.500M10.500 10.500L8.300 12.800l2.200 2.300M18 10.500l2.200 2.300-2.200 2.300" strokeWidth="2.400" />
        </Glyph>
      </Btn>
    </footer>
  );
}

export default function App() {
  return (
    <div className="flex h-screen min-h-[560px] flex-col overflow-hidden bg-[#f4f4f4] [font-family:'Noto_Sans','Noto_Sans_CJK_SC',sans-serif]">
      <header className="shrink-0 bg-[#0a77eb]">
        <TitleBar />
        <MenuBar />
      </header>
      <div className="flex min-h-0 flex-1 flex-col border-x-2 border-b-2 border-[#dfdfdf]">
        <Ribbon />
        <div className="flex min-h-0 flex-1">
          <SymbolPanel />
          <Workspace />
          <SideBar />
        </div>
        <StatusBar />
      </div>
    </div>
  );
}
